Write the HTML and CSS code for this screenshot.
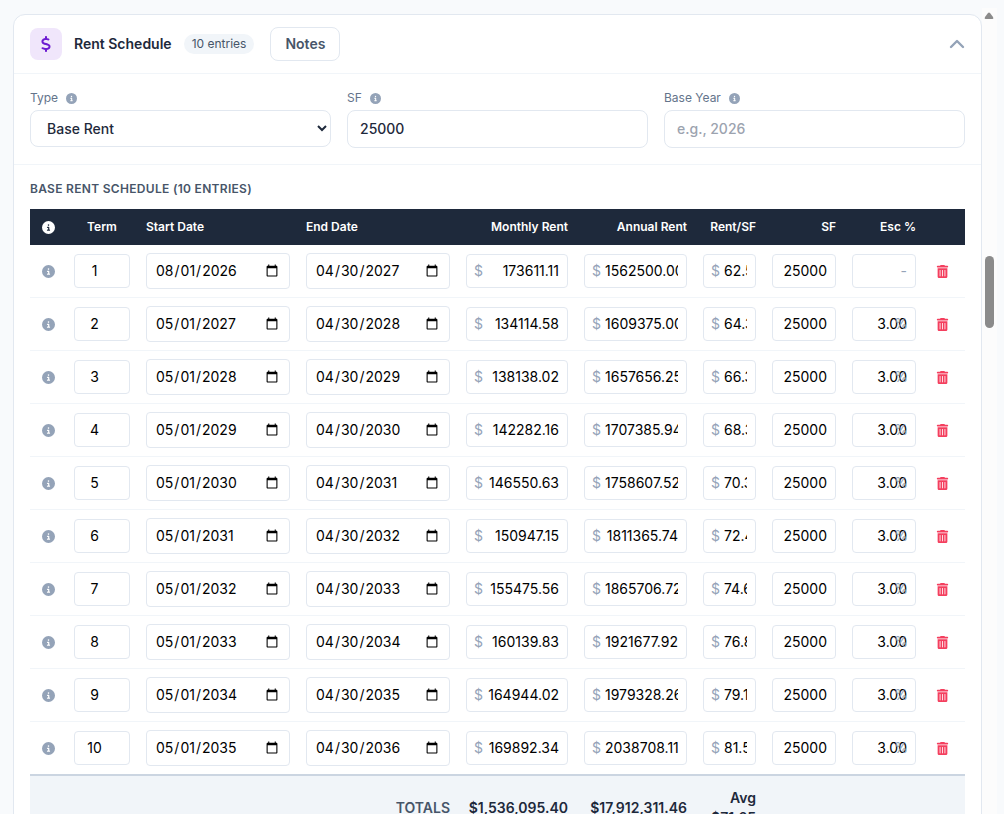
FILE: index.html
```html
<!DOCTYPE html>
<html lang="en">
<head>
    <meta charset="UTF-8">
    <meta name="viewport" content="width=device-width, initial-scale=1.0">
    <title>Rent Schedule</title>
    <link rel="stylesheet" href="styles.css">
</head>
<body>
    <svg class="sprite" aria-hidden="true">
        <symbol id="icon-info" viewBox="0 0 512 512">
            <path d="M256 512A256 256 0 1 0 256 0a256 256 0 1 0 0 512zM216 336h24V272H216c-13.300 0-24-10.700-24-24s10.700-24 24-24h48c13.300 0 24 10.700 24 24v88h8c13.300 0 24 10.700 24 24s-10.700 24-24 24H216c-13.300 0-24-10.700-24-24s10.700-24 24-24zm40-208a32 32 0 1 1 0 64 32 32 0 1 1 0-64z"/>
        </symbol>
        <symbol id="icon-trash" viewBox="0 0 448 512">
            <path d="M135.200 17.700C140.600 6.800 151.700 0 163.800 0H284.200c12.100 0 23.200 6.800 28.600 17.700L320 32h96c17.700 0 32 14.300 32 32s-14.300 32-32 32H32C14.300 96 0 81.700 0 64S14.300 32 32 32h96l7.200-14.300zM32 128H416V448c0 35.300-28.700 64-64 64H96c-35.300 0-64-28.700-64-64V128zm96 64c-8.800 0-16 7.200-16 16V432c0 8.800 7.200 16 16 16s16-7.200 16-16V208c0-8.800-7.200-16-16-16zm96 0c-8.800 0-16 7.200-16 16V432c0 8.800 7.200 16 16 16s16-7.200 16-16V208c0-8.800-7.200-16-16-16zm96 0c-8.800 0-16 7.200-16 16V432c0 8.800 7.200 16 16 16s16-7.200 16-16V208c0-8.800-7.200-16-16-16z"/>
        </symbol>
    </svg>

    <main class="content">
        <section class="card">
            <header class="card-header">
                <span class="card-icon">
                    <svg viewBox="0 0 320 512" aria-hidden="true"><path d="M160 0c17.700 0 32 14.300 32 32v35.700c1.600 .2 3.100 .4 4.700 .7 .4 .1 .7 .1 1.100 .2l48 8.800c17.400 3.200 28.900 19.900 25.700 37.200s-19.900 28.900-37.200 25.700l-47.500-8.700c-31.300-4.600-58.900-1.500-78.300 6.200s-27.200 18.300-29 28.100c-2 10.700-.5 16.700 1.200 20.400 1.800 3.900 5.500 8.300 12.800 13.200 16.300 10.700 41.300 17.700 73.700 26.300l2.900 .8c28.600 7.600 63.600 16.800 89.600 33.800 14.200 9.300 27.600 21.900 35.900 39.500 8.500 17.900 10.300 37.900 6.400 59.200-6.900 38-33.100 63.400-65.600 76.700-13.700 5.600-28.600 9.200-44.400 11V480c0 17.700-14.300 32-32 32s-32-14.300-32-32v-34.900c-.4-.1-.9-.1-1.300-.2l-.2 0c-24.400-3.800-64.500-14.300-91.500-26.300-16.100-7.200-23.400-26.100-16.200-42.200s26.100-23.400 42.200-16.200c20.900 9.300 55.300 18.500 75.200 21.600 31.900 4.700 58.200 2 76-5.300 16.900-6.900 24.600-16.900 26.800-28.900 1.900-10.600 .4-16.700-1.300-20.400-1.900-4-5.600-8.400-13-13.300-16.400-10.700-41.500-17.700-74-26.300l-2.800-.7C119.400 279.300 84.400 270 58.400 253c-14.200-9.300-27.500-22-35.800-39.600-8.400-17.900-10.100-37.900-6.100-59.200C23.700 116 52.300 91.200 84.800 78.300c13.300-5.300 27.900-8.900 43.200-11V32c0-17.700 14.300-32 32-32z"/></svg>
                </span>
                <h2 class="card-title">Rent Schedule</h2>
                <span class="badge">10 entries</span>
                <button type="button" class="btn-notes">Notes</button>
                <button type="button" class="btn-collapse" aria-label="Collapse">
                    <svg viewBox="0 0 16 16" aria-hidden="true"><path d="M2 11l6-6 6 6"/></svg>
                </button>
            </header>

            <div class="fields">
                <div class="field">
                    <label for="type">Type <svg class="icon-info"><use href="#icon-info"/></svg></label>
                    <select id="type">
                        <option>Base Rent</option>
                    </select>
                </div>
                <div class="field">
                    <label for="sf">SF <svg class="icon-info"><use href="#icon-info"/></svg></label>
                    <input type="text" id="sf" value="25000">
                </div>
                <div class="field">
                    <label for="baseYear">Base Year <svg class="icon-info"><use href="#icon-info"/></svg></label>
                    <input type="text" id="baseYear" placeholder="e.g., 2026">
                </div>
            </div>

            <div class="schedule">
                <h3 class="schedule-title">Base Rent Schedule (10 entries)</h3>
                <table class="schedule-table">
                    <colgroup>
                        <col class="col-info">
                        <col class="col-term">
                        <col class="col-date">
                        <col class="col-date">
                        <col class="col-monthly">
                        <col>
                        <col class="col-rate">
                        <col class="col-small">
                        <col class="col-small">
                        <col class="col-delete">
                    </colgroup>
                    <thead>
                        <tr>
                            <th class="center"><svg class="icon-info"><use href="#icon-info"/></svg></th>
                            <th class="center">Term</th>
                            <th>Start Date</th>
                            <th>End Date</th>
                            <th class="right">Monthly Rent</th>
                            <th class="right">Annual Rent</th>
                            <th class="right">Rent/SF</th>
                            <th class="right">SF</th>
                            <th class="right">Esc %</th>
                            <th></th>
                        </tr>
                    </thead>
                    <tbody id="rows"></tbody>
                    <tfoot>
                        <tr>
                            <td colspan="4" class="totals-label">TOTALS</td>
                            <td>$1,536,095.40</td>
                            <td>$17,912,311.46</td>
                            <td>Avg $71.65</td>
                            <td colspan="3"></td>
                        </tr>
                    </tfoot>
                </table>
            </div>
        </section>
    </main>

    <div class="scrollbar" aria-hidden="true">
        <svg class="scrollbar-arrow" viewBox="0 0 10 8"><path d="M4 1Q5 0 6 1L9 5Q10 7 8.500 7H1.500Q0 7 1 5Z"/></svg>
        <div class="scrollbar-thumb"></div>
    </div>

    <script src="script.js"></script>
</body>
</html>
```

FILE: styles.css
```css
* {
    box-sizing: border-box;
}

body {
    margin: 0;
    height: 100vh;
    overflow: hidden;
    display: flex;
    font-family: Inter, "Liberation Sans", sans-serif;
    font-size: 14px;
    line-height: 20px;
    color: #1e293b;
    background-color: #f8fafc;
}

h2,
h3 {
    margin: 0;
}

button,
input,
select {
    font-family: inherit;
    font-size: 14px;
    line-height: 20px;
}

.sprite {
    display: none;
}

.content {
    flex: 1;
    min-width: 0;
    padding: 14px 0 0 13px;
}

.card {
    background-color: #fff;
    border: 1px solid #e2e8f0;
    border-radius: 12px;
}

/* header */
.card-header {
    display: flex;
    align-items: center;
    gap: 12px;
    padding: 12px 16px;
    border-bottom: 1px solid #f1f5f9;
}

.card-icon {
    display: flex;
    align-items: center;
    justify-content: center;
    width: 32px;
    height: 32px;
    border-radius: 8px;
    background-color: #f0e6fb;
}

.card-icon svg {
    width: 10px;
    height: 16px;
    fill: #6d1bd1;
}

.card-title {
    font-size: 14px;
    font-weight: 600;
}

.badge {
    padding: 2px 8px;
    border-radius: 10px;
    font-size: 12px;
    line-height: 16px;
    color: #475569;
    background-color: #f1f5f9;
}

.btn-notes {
    margin-left: 4px;
    padding: 6px 14px;
    border: 1px solid #e2e8f0;
    border-radius: 8px;
    font-weight: 600;
    color: #475569;
    background-color: #fff;
}

.btn-collapse {
    display: flex;
    margin-left: auto;
    padding: 0;
    border: none;
    background: none;
}

.btn-collapse svg {
    width: 16px;
    height: 16px;
    fill: none;
    stroke: #94a3b8;
    stroke-width: 2.4;
    stroke-linecap: round;
    stroke-linejoin: round;
}

/* fields */
.fields {
    display: grid;
    grid-template-columns: repeat(3, 1fr);
    align-items: start;
    gap: 16px;
    padding: 16px;
    border-bottom: 1px solid #f1f5f9;
}

.field {
    display: flex;
    flex-direction: column;
    gap: 4px;
}

.field label {
    display: flex;
    align-items: center;
    gap: 8px;
    font-size: 12px;
    line-height: 16px;
    color: #64748b;
}

.field input,
.field select {
    width: 100%;
    padding: 8px 12px;
    border: 1px solid #e2e8f0;
    border-radius: 8px;
    font-weight: 500;
    color: #1e293b;
    background-color: #fff;
}

.field select {
    height: 37px;
    padding: 8px 0 8px 12px;
}

.field input::placeholder {
    color: #9ca3af;
}

.icon-info {
    width: 11px;
    height: 11px;
    fill: #94a3b8;
}

/* schedule table */
.schedule {
    padding: 16px;
}

.schedule-title {
    margin-bottom: 12px;
    font-size: 12px;
    line-height: 16px;
    font-weight: 600;
    letter-spacing: 0.025em;
    text-transform: uppercase;
    color: #475569;
}

.schedule-table {
    width: 100%;
    table-layout: fixed;
    border-collapse: separate;
    border-spacing: 0;
}

.col-info {
    width: 36px;
}

.col-term {
    width: 72px;
}

.col-date {
    width: 160px;
}

.col-monthly {
    width: 118px;
}

.col-rate {
    width: 69px;
}

.col-small {
    width: 80px;
}

.col-delete {
    width: 41px;
}

.schedule-table th {
    padding: 10px 8px;
    font-size: 12px;
    line-height: 16px;
    font-weight: 600;
    text-align: left;
    color: #fff;
    background-color: #1e293b;
}

.schedule-table .center {
    text-align: center;
}

.schedule-table .right {
    text-align: right;
}

.schedule-table th svg,
.schedule-table td svg {
    display: block;
    width: 13px;
    height: 13px;
    margin: 0 auto;
}

.schedule-table th svg {
    fill: #fff;
}

.schedule-table td {
    padding: 8px;
    border-bottom: 1px solid #f1f5f9;
}

.schedule-table tbody td:last-child {
    padding-right: 12px;
}

.schedule-table tbody tr:last-child td {
    border-bottom: none;
}

.schedule-table input {
    display: block;
    width: 100%;
    height: 34px;
    padding: 5px 8px 7px;
    border: 1px solid #e2e8f0;
    border-radius: 4px;
    color: #000;
    background-color: #fff;
}

.schedule-table input[type="date"] {
    height: 36px;
    padding: 6px 8px;
}

.schedule-table input::placeholder {
    color: #94a3b8;
}

.cell-input {
    position: relative;
}

.cell-input .prefix,
.cell-input .suffix {
    position: absolute;
    top: 7px;
    color: #94a3b8;
}

.cell-input .prefix {
    left: 8px;
}

.cell-input .suffix {
    right: 8px;
}

.cell-input .prefix + input {
    padding-left: 20px;
}

.btn-delete {
    display: block;
    width: 100%;
    padding: 0;
    border: none;
    background: none;
}

.btn-delete svg {
    fill: #f43f5e;
}

.schedule-table tfoot td {
    padding: 12px 8px;
    border-top: 2px solid #cbd5e1;
    font-weight: 600;
    text-align: right;
    background-color: #f1f5f9;
}

.schedule-table tfoot .totals-label {
    color: #475569;
}

/* scrollbar */
.scrollbar {
    flex: none;
    width: 15px;
    margin: 8px 7px 0 0;
    background-color: #fcfcfc;
}

.scrollbar-arrow {
    display: block;
    width: 10px;
    height: 8px;
    margin: 4px auto 0 2px;
    fill: #8b8b8b;
}

.scrollbar-thumb {
    width: 9px;
    height: 72px;
    margin: 236px 0 0 3px;
    border-radius: 5px;
    background-color: #8b8b8b;
}
```

FILE: script.js
```js
const schedule = [
    ['2026-08-01', '2027-04-30', '173611.11', '1562500.00', '62.50', ''],
    ['2027-05-01', '2028-04-30', '134114.58', '1609375.00', '64.38', '3.00'],
    ['2028-05-01', '2029-04-30', '138138.02', '1657656.25', '66.31', '3.00'],
    ['2029-05-01', '2030-04-30', '142282.16', '1707385.94', '68.30', '3.00'],
    ['2030-05-01', '2031-04-30', '146550.63', '1758607.52', '70.34', '3.00'],
    ['2031-05-01', '2032-04-30', '150947.15', '1811365.74', '72.45', '3.00'],
    ['2032-05-01', '2033-04-30', '155475.56', '1865706.72', '74.63', '3.00'],
    ['2033-05-01', '2034-04-30', '160139.83', '1921677.92', '76.87', '3.00'],
    ['2034-05-01', '2035-04-30', '164944.02', '1979328.26', '79.17', '3.00'],
    ['2035-05-01', '2036-04-30', '169892.34', '2038708.11', '81.55', '3.00']
];

function money(value, label) {
    return `<div class="cell-input"><span class="prefix">$</span><input type="text" class="right" value="${value}" aria-label="${label}"></div>`;
}

document.getElementById('rows').innerHTML = schedule.map(([start, end, monthly, annual, rate, esc], i) => `
    <tr>
        <td><svg class="icon-info"><use href="#icon-info"/></svg></td>
        <td><input type="number" class="center" value="${i + 1}" aria-label="Term"></td>
        <td><input type="date" value="${start}" aria-label="Start Date"></td>
        <td><input type="date" value="${end}" aria-label="End Date"></td>
        <td>${money(monthly, 'Monthly Rent')}</td>
        <td>${money(annual, 'Annual Rent')}</td>
        <td>${money(rate, 'Rent/SF')}</td>
        <td><input type="text" class="right" value="25000" aria-label="SF"></td>
        <td><div class="cell-input"><input type="text" class="right" value="${esc}" placeholder="-" aria-label="Esc %">${esc ? '<span class="suffix">%</span>' : ''}</div></td>
        <td><button type="button" class="btn-delete" aria-label="Delete"><svg><use href="#icon-trash"/></svg></button></td>
    </tr>`).join('');
```
